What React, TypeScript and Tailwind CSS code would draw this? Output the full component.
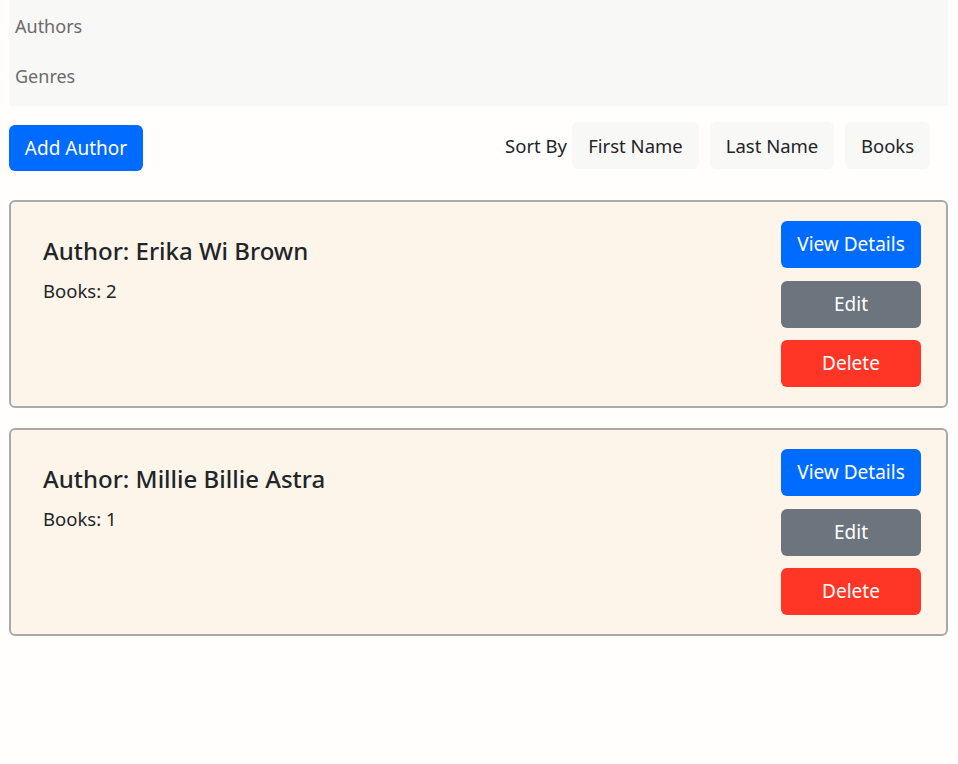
import React from "react";

const authors = [
  { name: "Erika Wi Brown", books: 2 },
  { name: "Millie Billie Astra", books: 1 },
];

export default function App() {
  return (
    <div
      className="min-h-screen w-full bg-[#fffefc] pl-[9px] pr-[10px] text-[#212529]"
      style={{ fontFamily: '"Noto Sans", "Open Sans", sans-serif' }}
    >
      <nav className="flex flex-col bg-[#f8f8f7] px-[6px] pt-[1px] pb-[5px]">
        <a className="flex h-[50px] items-center text-[18px] text-[#6b6b6b]">Authors</a>
        <a className="flex h-[50px] items-center text-[18px] text-[#6b6b6b]">Genres</a>
      </nav>

      <div className="mt-[16px] flex items-start justify-between pr-[18px]">
        <button className="mt-[3px] h-[46px] w-[134px] rounded-[6px] bg-[#006cff] text-[19px] text-white">
          Add Author
        </button>
        <div className="flex items-center">
          <span className="mr-[5px] text-[18.5px]">Sort By</span>
          <button className="h-[47px] w-[127px] rounded-[6px] bg-[#f8f8f7] text-[18.5px]">First Name</button>
          <button className="ml-[11px] h-[47px] w-[124px] rounded-[6px] bg-[#f8f8f7] text-[18.5px]">Last Name</button>
          <button className="ml-[11px] h-[47px] w-[85px] rounded-[6px] bg-[#f8f8f7] text-[18.5px]">Books</button>
        </div>
      </div>

      <div className="mt-[29px] flex flex-col gap-[20px]">
        {authors.map((a) => (
          <div
            key={a.name}
            className="flex justify-between rounded-[6px] border-2 border-[#a9a9a9] bg-[#fdf5e9] py-[19px] pl-[32px] pr-[25px]"
          >
            <div className="pt-[15px]">
              <h2 className="text-[24px] font-medium leading-[30px] text-[#212529]">Author: {a.name}</h2>
              <p className="mt-[10px] text-[18.5px] leading-[30px]">Books: {a.books}</p>
            </div>
            <div className="flex flex-col gap-[12.5px]">
              <button className="h-[47px] w-[140px] rounded-[6px] bg-[#006cff] text-[19px] text-white">View Details</button>
              <button className="h-[47px] w-[140px] rounded-[6px] bg-[#6c757d] text-[19px] text-white">Edit</button>
              <button className="h-[47px] w-[140px] rounded-[6px] bg-[#ff3526] text-[19px] text-white">Delete</button>
            </div>
          </div>
        ))}
      </div>
    </div>
  );
}
